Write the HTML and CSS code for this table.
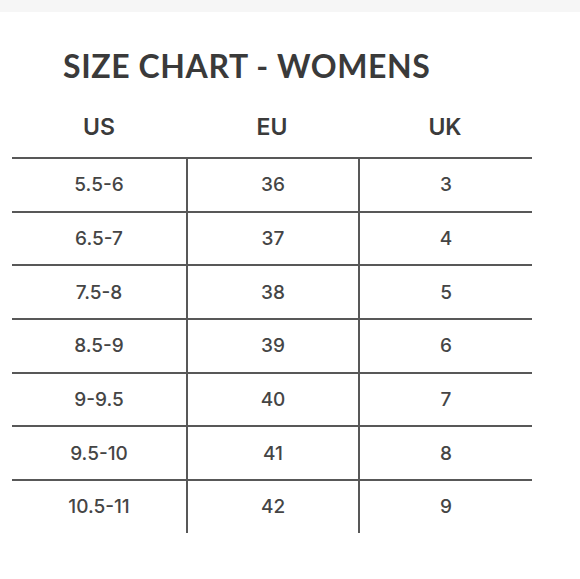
FILE: index.html
```html
<!DOCTYPE html>
<html>
<head>
<meta charset="utf-8">
<link rel="stylesheet" href="styles.css">
</head>
<body>
<div class="band"></div>
<h1 class="title">SIZE CHART - WOMENS</h1>
<div class="chart">
  <div class="head">
    <div>US</div><div>EU</div><div>UK</div>
  </div>
  <div class="row"><div>5.5-6</div><div>36</div><div>3</div></div>
  <div class="row"><div>6.5-7</div><div>37</div><div>4</div></div>
  <div class="row"><div>7.5-8</div><div>38</div><div>5</div></div>
  <div class="row"><div>8.5-9</div><div>39</div><div>6</div></div>
  <div class="row"><div>9-9.5</div><div>40</div><div>7</div></div>
  <div class="row"><div>9.5-10</div><div>41</div><div>8</div></div>
  <div class="row"><div>10.5-11</div><div>42</div><div>9</div></div>
</div>
</body>
</html>
```

FILE: styles.css
```css
html, body {
  margin: 0;
  padding: 0;
  background: #ffffff;
}
body {
  font-family: "Inter", "Lato", "Liberation Sans", sans-serif;
  color: #444444;
}
.band {
  height: 12px;
  background: #f6f6f6;
}
.title {
  margin: 0;
  padding: 34px 0 0 63px;
  height: 54px;
  font-family: "Lato", "Liberation Sans", sans-serif;
  font-size: 32px;
  font-weight: 700;
  letter-spacing: 0.6px;
  line-height: 40px;
  color: #3a3a3a;
}
.chart {
  margin-left: 12px;
  width: 520px;
}
.head {
  display: grid;
  grid-template-columns: 174px 172px 174px;
  height: 57px;
  align-items: center;
  font-size: 23px;
  font-weight: 600;
  color: #3b3b3b;
  text-align: center;
}
.head div {
  padding-bottom: 4px;
}
.row {
  display: grid;
  grid-template-columns: 174px 172px 174px;
  height: 53.67px;
  box-sizing: border-box;
  border-top: 2px solid #585858;
  font-size: 19px;
  font-weight: 500;
  color: #454545;
  text-align: center;
}
.row div {
  display: flex;
  align-items: center;
  justify-content: center;
}
.row div + div {
  border-left: 2px solid #585858;
}
```
